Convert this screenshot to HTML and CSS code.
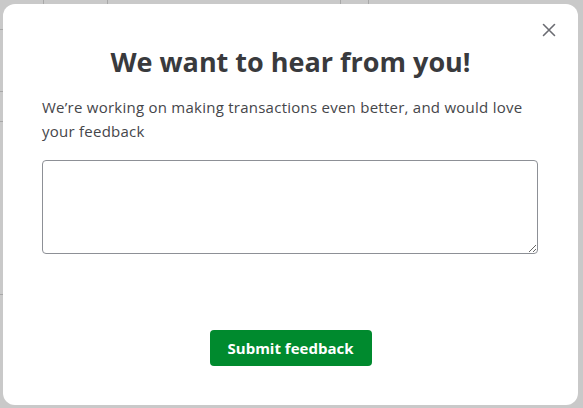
FILE: index.html
```html
<!DOCTYPE html>
<html>
<head>
<meta charset="utf-8">
<link rel="stylesheet" href="styles.css">
</head>
<body>
<div class="backdrop">
  <span class="bg-line v1"></span>
  <span class="bg-line v2"></span>
  <span class="bg-line v3"></span>
  <span class="bg-line v4"></span>
  <span class="bg-line h1"></span>
  <span class="bg-line h2"></span>
  <span class="bg-line h3"></span>
  <span class="bg-line h4"></span>
</div>
<div class="modal">
  <button class="close" aria-label="Close">
    <svg width="14" height="14" viewBox="0 0 14 14"><path d="M1.5 1.5 L12.5 12.5 M12.5 1.5 L1.5 12.5" stroke="#6b6c72" stroke-width="1.6" stroke-linecap="round"/></svg>
  </button>
  <h1 class="title">We want to hear from you!</h1>
  <p class="desc">We’re working on making transactions even better, and would love your feedback</p>
  <textarea class="feedback"></textarea>
  <div class="actions">
    <button class="submit">Submit feedback</button>
  </div>
</div>
</body>
</html>
```
FILE: styles.css
```css
html, body {
  margin: 0;
  height: 100%;
}
body {
  background: #c9c9c9;
  font-family: "Open Sans", "Noto Sans", sans-serif;
  padding: 4px 5px 3px 3px;
  box-sizing: border-box;
  overflow: hidden;
}
.backdrop {
  position: fixed;
  inset: 0;
  z-index: 0;
}
.bg-line {
  position: absolute;
  background: #a8a8a8;
}
.v1 { left: 43px; top: 0; width: 1px; height: 4px; }
.v2 { left: 107px; top: 0; width: 1px; height: 4px; }
.v3 { left: 340px; top: 0; width: 1px; height: 4px; }
.v4 { left: 368px; top: 0; width: 1px; height: 4px; }
.h1 { left: 0; top: 29px; width: 3px; height: 1px; }
.h2 { left: 0; top: 91px; width: 3px; height: 1px; }
.h3 { left: 0; top: 121px; width: 3px; height: 1px; }
.h4 { left: 0; top: 294px; width: 3px; height: 1px; }
.modal {
  position: relative;
  z-index: 1;
  width: 575px;
  height: 401px;
  box-sizing: border-box;
  background: #fff;
  border-radius: 12px;
  padding: 41px 39px 0 39px;
  display: flex;
  flex-direction: column;
}
.close {
  position: absolute;
  top: 19px;
  right: 22px;
  width: 14px;
  height: 14px;
  padding: 0;
  border: 0;
  background: none;
  display: flex;
}
.title {
  margin: 0;
  text-align: center;
  font-size: 27px;
  line-height: 34px;
  font-weight: 700;
  color: #393a3d;
}
.desc {
  margin: 16px 0 0 0;
  font-size: 15px;
  line-height: 24px;
  letter-spacing: 0.25px;
  color: #45464a;
}
.feedback {
  margin: 17px 0 0 0;
  width: 496px;
  height: 94px;
  box-sizing: border-box;
  border: 1px solid #8d9096;
  border-radius: 4px;
  resize: vertical;
  font-family: inherit;
}
.actions {
  display: flex;
  justify-content: center;
  margin-top: 76px;
}
.submit {
  width: 162px;
  height: 36px;
  border: 0;
  border-radius: 4px;
  background: #008a2e;
  color: #fff;
  font-family: inherit;
  font-size: 15px;
  font-weight: 700;
}
```
